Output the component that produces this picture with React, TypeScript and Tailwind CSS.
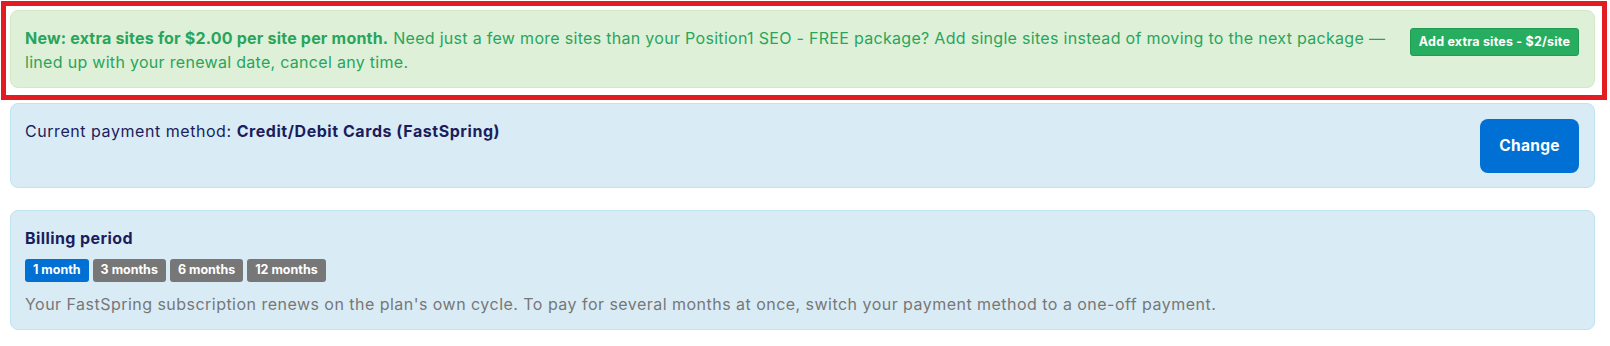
import React from "react";

const periods = [
  { label: "1 month", active: true },
  { label: "3 months", active: false },
  { label: "6 months", active: false },
  { label: "12 months", active: false },
];

const App = () => {
  return (
    <div className="min-h-[346px] bg-white pt-px pl-px font-['Inter','Open_Sans',sans-serif] text-[16px] tracking-[0.45px]">
      {/* highlighted upsell */}
      <div className="w-[1606px] border-[5px] border-[#e31c23] pt-[4px] pl-[4px] pr-[7px] pb-[7px]">
        <div className="flex items-start gap-[12px] rounded-[8px] border border-[#d3e9c4] bg-[#dff0d8] pt-[15px] pb-[13px] pl-[14px] pr-[15px] text-[#28a55c]">
          <p className="flex-1 leading-[24px] tracking-[0.3px]">
            <strong className="font-bold tracking-[0.2px]">New: extra sites for $2.00 per site per month.</strong>{" "}
            Need just a few more sites than your Position1 SEO - FREE package? Add single sites
            instead of moving to the next package{"\u00a0"}— lined up with your renewal date, cancel
            any time.
          </p>
          <button
            type="button"
            className="mt-[2px] h-[28px] w-[169px] shrink-0 rounded-[3px] border border-[#229a52] bg-[#27ad60] text-[12.5px] font-bold tracking-[0.2px] text-white"
          >
            Add extra sites - $2/site
          </button>
        </div>
      </div>

      <div className="ml-[9px] mt-[3px] w-[1585px]">
        <div className="flex items-start justify-between rounded-[8px] border border-[#bfe4f0] bg-[#d9ecf6] pt-[15px] pr-[15px] pb-[14px] pl-[14px]">
          <p className="leading-[24px] tracking-[0.55px] text-[#1b1d5c]">
            Current payment method:{" "}
            <strong className="font-bold tracking-[0.55px]">Credit/Debit Cards (FastSpring)</strong>
          </p>
          <button
            type="button"
            className="h-[54px] w-[99px] rounded-[8px] bg-[#0070d4] text-[15.5px] font-bold tracking-[0.3px] text-white"
          >
            Change
          </button>
        </div>

        <div className="mt-[22px] rounded-[8px] border border-[#bfe4f0] bg-[#d9ecf6] pt-[15px] pr-[15px] pb-[13px] pl-[14px]">
          <h4 className="text-[16px] font-bold leading-[24px] tracking-[0.4px] text-[#1b1d5c]">Billing period</h4>
          <div className="mt-[9px] flex gap-[4px]">
            {periods.map((p) => (
              <span
                key={p.label}
                className={`flex h-[23px] items-center rounded-[3px] px-[8px] text-[12.5px] font-bold tracking-normal text-white ${
                  p.active ? "bg-[#0070d4]" : "bg-[#777777]"
                }`}
              >
                {p.label}
              </span>
            ))}
          </div>
          <p className="mt-[10px] leading-[24px] tracking-[0.47px] text-[#777777]">
            Your FastSpring subscription renews on the plan's own cycle. To pay for several months
            at once, switch your payment method to a one-off payment.
          </p>
        </div>
      </div>
    </div>
  );
};

export default App;
